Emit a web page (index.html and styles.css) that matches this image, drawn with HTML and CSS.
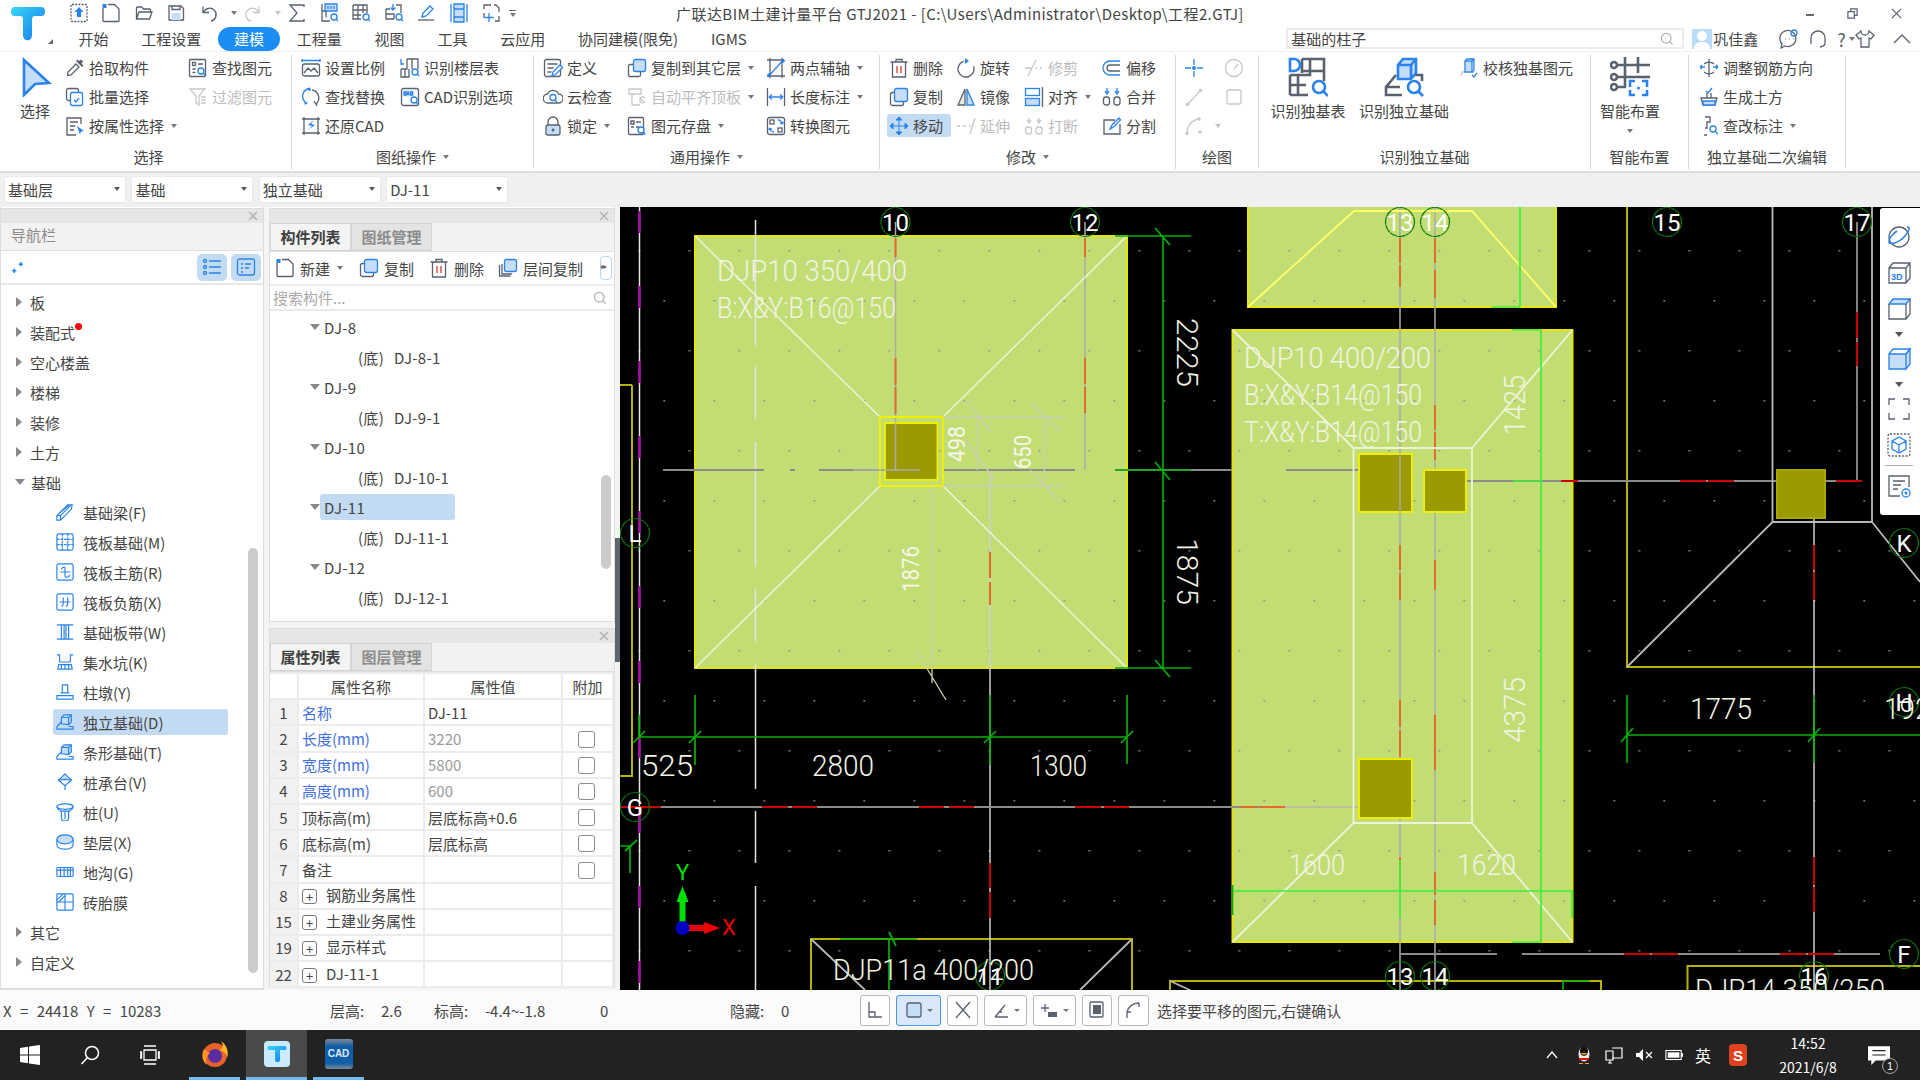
FILE: index.html
```html
<!DOCTYPE html>
<html lang="zh-CN">
<head>
<meta charset="utf-8">
<title>广联达BIM土建计量平台 GTJ2021</title>
<link rel="stylesheet" href="styles.css">
</head>
<body>
<svg class="defs" width="0" height="0">
  <defs>
    <linearGradient id="tgrad" x1="0" y1="0" x2="1" y2="1"><stop offset="0" stop-color="#38d6f5"/><stop offset="1" stop-color="#1478f0"/></linearGradient>
    <pattern id="dots" x="688.5" y="250" width="50" height="100" patternUnits="userSpaceOnUse"><rect width="1.6" height="1.6" fill="#8c8c8c"/><rect x="25" y="50" width="1.6" height="1.6" fill="#8c8c8c"/></pattern>
    <!-- quick access -->
    <symbol id="u-up" viewBox="0 0 20 20"><rect class="g" x="2" y="1.5" width="16" height="17" rx="1" stroke-dasharray="2 1.2"/><path class="bf" d="M10 4l4.500 5H12v5H8V9H5.500z"/></symbol>
    <symbol id="u-new" viewBox="0 0 20 20"><path class="g" d="M2 5v12.500a1 1 0 0 0 1 1h14a1 1 0 0 0 1-1V6l-4.500-4.500H7"/><rect class="bf" x="1.500" y="1" width="4" height="4"/></symbol>
    <symbol id="u-open" viewBox="0 0 20 20"><path class="g" d="M2.500 16V5a1 1 0 0 1 1-1h4l2 2h6a1 1 0 0 1 1 1v2M2.500 16l2.500-7h13l-2.500 7z"/></symbol>
    <symbol id="u-save" viewBox="0 0 20 20"><path class="g" d="M3 3h12l2.500 2.500V17H3z"/><rect class="ff" x="5.500" y="10" width="9" height="7"/><path class="g" d="M6 3v3.500h8V3"/></symbol>
    <symbol id="u-undo" viewBox="0 0 20 20"><path class="g" d="M4 3.500v6h6M4.500 9.500A6.500 6.500 0 1 1 12 18"/></symbol>
    <symbol id="u-redo" viewBox="0 0 20 20"><path class="l" d="M16 3.500v6h-6M15.500 9.500A6.500 6.500 0 1 0 8 18"/></symbol>
    <symbol id="u-sum" viewBox="0 0 20 20"><path class="g" d="M17 4V2H3l7 8-7 8h14v-2"/></symbol>
    <symbol id="u-t1" viewBox="0 0 20 20"><path class="g" d="M3 1v17h8M3 8h4v6"/><rect class="ff" x="6" y="1" width="12" height="7"/><path class="b" d="M6 1h12v7H6zM9 3v3M12 3v3M15 3v3"/><circle class="b" cx="15" cy="14" r="3"/><path class="b" d="M17 16l2 2"/></symbol>
    <symbol id="u-t2" viewBox="0 0 20 20"><path class="g" d="M2 2h14v8M2 2v14h8M2 7h14M2 12h8M7 2v14M12 2v8"/><circle class="b" cx="15" cy="14" r="3"/><path class="b" d="M17 16l2 2"/></symbol>
    <symbol id="u-t3" viewBox="0 0 20 20"><path class="g" d="M2 6v10h8M2 11h8v5M12 2h5v8M2 6h4"/><path class="b" d="M9 1v6M6.500 4.500L9 7l2.500-2.500"/><circle class="b" cx="15" cy="14" r="3"/><path class="b" d="M17 16l2 2"/></symbol>
    <symbol id="u-pen" viewBox="0 0 20 20"><path class="g" d="M2 17h16"/><path class="b" d="M6 14l1-4 7-7 3 3-7 7z"/></symbol>
    <symbol id="u-film" viewBox="0 0 20 20"><rect class="ff" x="5" y="1" width="10" height="18"/><path class="b" d="M2 1v18M18 1v18M5 1h10v18H5zM5 6h10M5 14h10"/></symbol>
    <symbol id="u-dash" viewBox="0 0 20 20"><path class="g" d="M3 6V2h4l3 0M13 2h2l3 3v4M18 13v5h-4M3 10v5"/><path class="b" d="M8 10v9M3.500 14.500h9"/></symbol>
    <!-- ribbon -->
    <symbol id="r-pick" viewBox="0 0 20 20"><path class="g" d="M2.500 17.500L3 14l8-8 3 3-8 8z"/><path class="gf" d="M11 3l6 6 1.500-1.500-2-2 1.500-2-2-2-2 1.500-1.500-1.500z"/></symbol>
    <symbol id="r-batch" viewBox="0 0 20 20"><rect class="g" x="1.500" y="1.500" width="12" height="12" rx="2"/><rect class="b white" x="5.500" y="5.500" width="12" height="13" rx="2"/><path class="b" d="M9 13l2 2 3-4"/></symbol>
    <symbol id="r-attr" viewBox="0 0 20 20"><path class="g" d="M16 8V2H2v17h9M5 6h8M5 10h5M5 14h4"/><path class="bf" d="M12 10l7 5-3 .5-1 3z"/></symbol>
    <symbol id="r-find" viewBox="0 0 20 20"><rect class="g" x="1.500" y="1.500" width="16" height="17" rx="1"/><rect class="g" x="4.500" y="4.500" width="3" height="3"/><path class="g" d="M10 6h5M4.500 11h3M4.500 14.500h3"/><circle class="b white" cx="13" cy="13" r="3"/><path class="b" d="M15 15l3 3"/></symbol>
    <symbol id="r-filter" viewBox="0 0 20 20"><path class="l" d="M2 2h15l-6 7v9l-3-2V9z"/><path class="l" d="M13 10h5M13 13h5M13 16h5"/></symbol>
    <symbol id="r-scale" viewBox="0 0 20 20"><path class="b" d="M1 1v3M19 1v3M1 2.500h18"/><rect class="g" x="1.500" y="6" width="17" height="12" rx="2"/><path class="g" d="M3 15l4-5 3 3 3-3 4 5"/></symbol>
    <symbol id="r-floor" viewBox="0 0 20 20"><path class="g" d="M7 1v10H1M7 1h11v10M12 1v10M1 11v8h8v-8M5 11v8"/><path class="b" d="M1 1v5h3"/><circle class="b white" cx="15" cy="14" r="3"/><path class="b" d="M17 16l2 2"/></symbol>
    <symbol id="r-replace" viewBox="0 0 20 20"><path class="b" d="M8 1.500A8 8 0 0 0 4 15"/><path class="g" d="M11 3a8 8 0 0 1 4 14"/><path class="bf" d="M9 0l-3 3 4 1zM4 18l3-2-4-2z"/><path class="g" d="M13 14l3 5"/></symbol>
    <symbol id="r-cad" viewBox="0 0 20 20"><rect class="g" x="1.500" y="1.500" width="17" height="17" rx="2"/><rect class="ff" x="3.500" y="3.500" width="10" height="6"/><path class="b" d="M4 5h2v3H4zM7 8l1-3 1 3M10.500 5v3h2V5z"/><circle class="b white" cx="14" cy="13" r="3"/><path class="b" d="M16 15l2.500 3"/></symbol>
    <symbol id="r-restore" viewBox="0 0 20 20"><path class="g" d="M1 3h18M1 17h18M3 1v18M17 1v18"/><path class="bf" d="M13 4l-6 5 4 1-4 4 7-5-4-1z"/></symbol>
    <symbol id="r-def" viewBox="0 0 20 20"><rect class="g" x="1.500" y="1.500" width="16" height="17" rx="2"/><path class="g" d="M4.500 6h10M4.500 10h6M4.500 14h4"/><path class="b white" d="M9 18l1-4 7-7 2.500 2.500-7 7z"/></symbol>
    <symbol id="r-cloud" viewBox="0 0 20 20"><path class="g" d="M5 16a4.500 4.500 0 0 1-.5-9 6 6 0 0 1 11 0 4.500 4.500 0 0 1 0 9z"/><circle class="b" cx="10" cy="10.500" r="3"/><path class="b" d="M12 13l2 2"/></symbol>
    <symbol id="r-lock" viewBox="0 0 20 20"><path class="g" d="M5 9V6a5 5 0 0 1 10 0v3"/><rect class="g ff" x="3" y="9" width="14" height="10" rx="2"/><circle class="gs" cx="10" cy="14" r="1.500"/></symbol>
    <symbol id="r-copyf" viewBox="0 0 20 20"><rect class="g" x="1.500" y="6.500" width="12" height="12" rx="1.500"/><rect class="b ff" x="6.500" y="1.500" width="12" height="12" rx="2"/></symbol>
    <symbol id="r-auto" viewBox="0 0 20 20"><path class="l" d="M2 2h12v5H2zM5 7v11M5 18h8M13 11l5 5M18 11a3 3 0 1 0-2 5"/></symbol>
    <symbol id="r-store" viewBox="0 0 20 20"><rect class="g" x="1.500" y="1.500" width="15" height="17" rx="1"/><path class="g" d="M4 5h3v3H4zM4 11h3M9 6h5M9 11h3"/><circle class="b white" cx="14" cy="14" r="3"/><path class="b" d="M16 16l2.500 2.500"/></symbol>
    <symbol id="r-two" viewBox="0 0 20 20"><path class="g" d="M1 2h16M1 18h18M4 0v20M16 0v20"/><path class="b" d="M2 19L18 1"/><circle class="bf" cx="3" cy="17" r="1.800"/><circle class="bf" cx="17" cy="3" r="1.800"/></symbol>
    <symbol id="r-len" viewBox="0 0 20 20"><path class="g" d="M1.500 1v18M18.500 1v18"/><path class="b" d="M3 10h14M3 10l3-2.500M3 10l3 2.500M17 10l-3-2.500M17 10l-3 2.500"/></symbol>
    <symbol id="r-conv" viewBox="0 0 20 20"><rect class="g" x="1.500" y="1.500" width="17" height="17" rx="2"/><rect class="g" x="4" y="4" width="4" height="4"/><rect class="g" x="12" y="12" width="4" height="4"/><path class="b" d="M12 4a4 4 0 0 1 4 4M16 8l1.500-2M16 8l-2-1.500M8 16a4 4 0 0 1-4-4M4 12l-1.500 2M4 12l2 1.500"/></symbol>
    <symbol id="r-del" viewBox="0 0 20 20"><path class="g" d="M1.500 4h17M7 4V1.500h6V4M3.500 4v15h13V4"/><path class="red" d="M8 8v7M12 8v7"/></symbol>
    <symbol id="r-copy" viewBox="0 0 20 20"><rect class="g" x="1.500" y="5.500" width="13" height="13" rx="2"/><rect class="b ff" x="5.500" y="1.500" width="13" height="13" rx="2"/></symbol>
    <symbol id="r-copyl" viewBox="0 0 20 20"><path class="g" d="M1.500 7v11h11M4 6v10h10"/><rect class="b ff" x="6.500" y="1.500" width="12" height="12" rx="2"/></symbol>
    <symbol id="r-move" viewBox="0 0 20 20"><path class="bd" d="M10 2v16M2 10h16M10 1l-3 3h6zM10 19l-3-3h6zM1 10l3-3v6zM19 10l-3-3v6z"/></symbol>
    <symbol id="r-rot" viewBox="0 0 20 20"><circle class="g" cx="10" cy="11" r="8" stroke-dasharray="38 12" transform="rotate(-20 10 11)"/><path class="bf" d="M9 0l4 3-4 3z"/></symbol>
    <symbol id="r-mirror" viewBox="0 0 20 20"><path class="gf2" d="M9 2L2 18h7z"/><path class="g" d="M9 2L2 18h7z"/><path class="b ff" d="M11 2l7 16h-7z"/></symbol>
    <symbol id="r-trim" viewBox="0 0 20 20"><path class="l" d="M1 10h7M11 10h2M16 10h2M4 18L12 2"/></symbol>
    <symbol id="r-ext" viewBox="0 0 20 20"><path class="l" d="M1 10h3M7 10h3M13 10h2M14 18L19 2"/></symbol>
    <symbol id="r-brk" viewBox="0 0 20 20"><rect class="l" x="1.500" y="11" width="6" height="7" rx="2.500"/><rect class="l" x="12" y="11" width="6" height="7" rx="2.500"/><path class="l" d="M5 2v5M15 2v5M3 4l2 3 2-3M13 4l2 3 2-3"/></symbol>
    <symbol id="r-align" viewBox="0 0 20 20"><rect class="b" x="1.500" y="1.500" width="14" height="7"/><rect class="b ff" x="1.500" y="11.500" width="14" height="7"/><path class="g" d="M18.500 0v20"/></symbol>
    <symbol id="r-off" viewBox="0 0 20 20"><path class="b" d="M18 3H8a7 7 0 0 0 0 14h10"/><path class="g" d="M18 7H8a3 3 0 0 0 0 6h10"/></symbol>
    <symbol id="r-merge" viewBox="0 0 20 20"><rect class="g" x="1.500" y="10" width="6" height="8" rx="2.500"/><rect class="g" x="12" y="10" width="6" height="8" rx="2.500"/><path class="b" d="M5 1v5M15 1v5M3 4l2 3 2-3M13 4l2 3 2-3"/></symbol>
    <symbol id="r-split" viewBox="0 0 20 20"><path class="g" d="M13 4H2v14h16V8"/><path class="b" d="M8 13l2-4 7-7 1.500 2-7 7z"/></symbol>
    <symbol id="d-point" viewBox="0 0 20 20"><path class="bd2" d="M1 10h6M13 10h6M10 1v6M10 13v6"/><circle class="bf" cx="10" cy="10" r="2"/></symbol>
    <symbol id="d-clock" viewBox="0 0 20 20"><circle class="l" cx="10" cy="10" r="8.500"/><path class="l" d="M10 11l4-5"/></symbol>
    <symbol id="d-line" viewBox="0 0 20 20"><path class="l" d="M3 18L17 3"/><circle class="lf" cx="16.500" cy="3.500" r="1.800"/><circle class="lf" cx="3.500" cy="17.500" r="1.800"/></symbol>
    <symbol id="d-rect" viewBox="0 0 20 20"><rect class="l" x="3" y="3" width="14" height="14" rx="2"/></symbol>
    <symbol id="d-arc" viewBox="0 0 20 20"><path class="l" d="M3 18A14 14 0 0 1 15 3"/><circle class="lf" cx="15" cy="3" r="1.800"/><circle class="lf" cx="3" cy="17.500" r="1.800"/><circle class="lf" cx="16" cy="16" r="1.800"/></symbol>
    <symbol id="b-sel" viewBox="0 0 40 40"><path class="bt ff" d="M9 3l25 23-14 1-11 11z"/></symbol>
    <symbol id="b-tab" viewBox="0 0 40 40"><path class="gt" d="M14 2h22v22M22 2v16M14 14h22M14 2v14M2 18h20v-4M2 38h18M2 18v20M10 18v20M2 28h16"/><path class="bt" d="M2 2v12h4a6 6 0 0 0 0-12z"/><circle class="bt white" cx="31" cy="30" r="6"/><path class="bt" d="M35 34l5 5"/></symbol>
    <symbol id="b-iso" viewBox="0 0 40 40"><path class="gt" d="M12 18L2 30v8h16M2 30h14M26 18h12v6"/><path class="bt ff" d="M14 22V8l5-6h13v14l-5 6zM14 8h13v14M27 8l5-6"/><circle class="bt white" cx="30" cy="30" r="6"/><path class="bt" d="M34 34l5 5"/></symbol>
    <symbol id="b-smart" viewBox="0 0 40 40"><path class="gt" d="M15 0v30M28 0v16M4 8h36M4 20h36M4 30h12"/><circle class="gt white" cx="4" cy="8" r="3"/><circle class="gt white" cx="4" cy="20" r="3"/><circle class="gt white" cx="4" cy="30" r="3"/><path class="bt" d="M20 30v-6h5M32 24h5v6M20 33v5h5M32 38h5v-5"/><circle class="bf" cx="28.500" cy="31" r="1.500"/></symbol>
    <symbol id="r-check" viewBox="0 0 20 20"><path class="l" d="M2 18l1-4h12"/><rect class="b ff" x="6" y="3" width="7" height="11"/><path class="b" d="M6 3l2-2h7v11l-2 2M13 3l2-2"/><path class="b" d="M13 17l2 2 3-4"/></symbol>
    <symbol id="r-adj" viewBox="0 0 20 20"><path class="g" d="M10 1v18M5 6a8 8 0 0 1 10 0M5 14a8 8 0 0 0 10 0"/><path class="b" d="M1 9h5M14 9h5M1 9l2-2M1 9l2 2M19 9l-2-2M19 9l-2 2"/></symbol>
    <symbol id="r-earth" viewBox="0 0 20 20"><path class="g" d="M2 11h16l-2 7H4zM8 11V6M12 11V6"/><path class="b ff" d="M3.500 14h13l-1 4h-11z"/><path class="b" d="M7 4l2 2 4-5"/></symbol>
    <symbol id="r-mark" viewBox="0 0 20 20"><path class="g" d="M6 1h5v5H8v6H6M8 19H5"/><circle class="b" cx="14" cy="13" r="3"/><path class="b" d="M16 15l3 3"/></symbol>
    <symbol id="i-search" viewBox="0 0 20 20"><circle cx="9" cy="9" r="6" class="lt"/><path class="lt" d="M13.500 13.500L17 17"/></symbol>
    <!-- nav -->
    <symbol id="n-beam" viewBox="0 0 20 20"><path class="b" d="M1 14L13 2h5l-1 5L5 19H1zM1 14h4v5M5 14L17 2M3 12L15 2"/></symbol>
    <symbol id="n-raft" viewBox="0 0 20 20"><rect class="b" x="1" y="1" width="18" height="18" rx="2"/><path class="b" d="M1 7h18M1 13h18M7 1v18M13 1v18" stroke-dasharray="3 1"/></symbol>
    <symbol id="n-main" viewBox="0 0 20 20"><rect class="b" x="1" y="1" width="18" height="18" rx="2"/><path class="b" d="M5 10h11M10 5v10M6 7a3 3 0 0 1 4-2M15 13a3 3 0 0 1-5 2"/></symbol>
    <symbol id="n-neg" viewBox="0 0 20 20"><rect class="b" x="1" y="1" width="18" height="18" rx="2"/><path class="b" d="M4 10h12M8 5v7a3 3 0 0 1-2 3M13 5v7a3 3 0 0 1-2 3"/></symbol>
    <symbol id="n-strip" viewBox="0 0 20 20"><path class="b" d="M1 2h18M1 18h18M6 2v16M14 2v16M9 2v16M11 2v16"/></symbol>
    <symbol id="n-sump" viewBox="0 0 20 20"><path class="b" d="M1 2h3v8h12V2h3M3 13h14l1 5H2zM6 13v5M10 13v5M14 13v5"/></symbol>
    <symbol id="n-cap" viewBox="0 0 20 20"><path class="b" d="M7 11V2h6v9M5 11h10M1 18v-4h18v4z"/></symbol>
    <symbol id="n-iso" viewBox="0 0 20 20"><path class="b ff" d="M6 12V5l3-3h8v8l-3 3z"/><path class="b" d="M6 5h8v8M14 5l3-3M6 10L1 15v3h18v-3h-5"/></symbol>
    <symbol id="n-pcap" viewBox="0 0 20 20"><path class="b ff" d="M10 1l7 7-7 6-7-6z"/><path class="b white" d="M10 7l7 1-7 6-7-6zM10 14v5"/></symbol>
    <symbol id="n-pile" viewBox="0 0 20 20"><ellipse class="b" cx="10" cy="4" rx="9" ry="3"/><path class="b" d="M1 4c0 4 4 3 4 5h10c0-2 4-1 4-5M6 9v8a4 3 0 0 0 8 0V9M10 9v9"/></symbol>
    <symbol id="n-pad" viewBox="0 0 20 20"><ellipse class="b ff" cx="10" cy="7" rx="9" ry="5"/><path class="b" d="M1 7v6c0 3 4 5 9 5s9-2 9-5V7"/></symbol>
    <symbol id="n-trench" viewBox="0 0 20 20"><rect class="b" x="1" y="5" width="18" height="10" rx="1"/><path class="b" d="M1 8h18M5 5v10M9 5v10M13 5v10M16 5v10"/></symbol>
    <symbol id="n-brick" viewBox="0 0 20 20"><rect class="b" x="1" y="1" width="18" height="18" rx="1"/><path class="b" d="M1 10h18M10 1v18M1 8l7-7M3 10l7-7"/></symbol>
    <!-- view toolbar -->
    <symbol id="v-orbit" viewBox="0 0 24 24"><circle class="g" cx="12" cy="12" r="10"/><path class="bt2" d="M2 18C6 20 14 16 18 11S24 2 20 2"/><path class="bt2" d="M2 18c-1-3 2-8 8-12"/></symbol>
    <symbol id="v-3d" viewBox="0 0 24 24"><path class="g" d="M2 7v15h17V7zM2 7l4-5h17v15l-4 5M19 7l4-5"/><text class="v3" x="4" y="19">3D</text></symbol>
    <symbol id="v-top" viewBox="0 0 24 24"><path class="b ff" d="M2 7l4-5h17l-4 5z"/><path class="g" d="M2 7v15h17V7M19 22l4-5V2"/></symbol>
    <symbol id="v-box" viewBox="0 0 24 24"><path class="b ff" d="M2 7v15h17V7zM19 7l4-5v15l-4 5z"/><path class="b" d="M2 7l4-5h17l-4 5"/></symbol>
    <symbol id="v-fit" viewBox="0 0 24 24"><path class="g" d="M2 8V2h6M16 2h6v6M22 16v6h-6M8 22H2v-6"/></symbol>
    <symbol id="v-cube" viewBox="0 0 24 24"><rect class="g" x="1" y="1" width="22" height="22" rx="2" stroke-dasharray="2 1.500"/><path class="b" d="M12 4l7 4v8l-7 4-7-4V8zM5 8l7 4 7-4M12 12v8"/></symbol>
    <symbol id="v-list" viewBox="0 0 24 24"><path class="g" d="M22 13V2H2v20h11M6 7h12M6 11h8M6 15h5"/><circle class="b" cx="19" cy="19" r="4"/><circle class="bf" cx="19" cy="19" r="1.500"/></symbol>
    <!-- status -->
    <symbol id="s-l" viewBox="0 0 20 20"><path class="g" d="M4 2v15h13M4 12h6v5"/></symbol>
    <symbol id="s-rect" viewBox="0 0 20 20"><rect class="g ff" x="3" y="3" width="14" height="14" rx="2"/></symbol>
    <symbol id="s-x" viewBox="0 0 20 20"><path class="g" d="M3 2l14 16M17 2L3 18"/></symbol>
    <symbol id="s-ang" viewBox="0 0 20 20"><path class="g" d="M4 17h13M4 17L14 5M8 12h3"/></symbol>
    <symbol id="s-plus" viewBox="0 0 20 20"><path class="g" d="M5 4v8M1 8h8"/><rect class="gf" x="8" y="12" width="9" height="5"/></symbol>
    <symbol id="s-box" viewBox="0 0 20 20"><rect class="g" x="3" y="2" width="13" height="15" rx="1"/><rect class="gf" x="6" y="5" width="8" height="9"/></symbol>
    <symbol id="s-arc" viewBox="0 0 20 20"><path class="g" d="M3 18V12A12 12 0 0 1 15 3M3 12h4M15 3v4"/></symbol>
  </defs>
</svg>

<div class="app">
  <header class="header">
    <div class="logo-wrap">
      <svg class="logo" viewBox="0 0 36 36"><path fill="url(#tgrad)" d="M3 2h28c4 0 4 9 0 9h-8c-2 1-2 2-2 4v15c0 7-9 7-9 0V15c0-2 0-3-2-4H3c-4 0-4-9 0-9z"/></svg>
      <span class="logo-mark"></span>
    </div>
    <div class="header-rows">
      <div class="titlerow">
        <div class="qa">
          <svg class="qi"><use href="#u-up"/></svg>
          <svg class="qi"><use href="#u-new"/></svg>
          <svg class="qi"><use href="#u-open"/></svg>
          <svg class="qi"><use href="#u-save"/></svg>
          <span class="qi-c"><svg class="qi"><use href="#u-undo"/></svg><i class="car"></i></span>
          <span class="qi-c"><svg class="qi"><use href="#u-redo"/></svg><i class="car dim"></i></span>
          <svg class="qi"><use href="#u-sum"/></svg>
          <svg class="qi"><use href="#u-t1"/></svg>
          <svg class="qi"><use href="#u-t2"/></svg>
          <svg class="qi"><use href="#u-t3"/></svg>
          <svg class="qi"><use href="#u-pen"/></svg>
          <svg class="qi"><use href="#u-film"/></svg>
          <svg class="qi"><use href="#u-dash"/></svg>
          <span class="qa-more"><i class="qa-bar"></i><i class="car"></i></span>
        </div>
        <div class="title">广联达BIM土建计量平台 GTJ2021 - [C:\Users\Administrator\Desktop\工程2.GTJ]</div>
        <div class="winctl">
          <span class="win-min"></span>
          <svg class="win-ic" viewBox="0 0 12 12"><path class="g" d="M1 4h7v7H1zM4 4V1h7v7H8"/></svg>
          <svg class="win-ic" viewBox="0 0 12 12"><path class="g" d="M1 1l10 10M11 1L1 11"/></svg>
        </div>
      </div>
      <div class="menurow">
        <nav class="menu">
          <span class="mi">开始</span><span class="mi">工程设置</span><span class="mi on">建模</span><span class="mi">工程量</span><span class="mi">视图</span><span class="mi">工具</span><span class="mi">云应用</span><span class="mi">协同建模(限免)</span><span class="mi">IGMS</span>
        </nav>
        <div class="searchbox"><span>基础的柱子</span><svg class="sicon"><use href="#i-search"/></svg></div>
        <div class="user">
          <svg class="avatar" viewBox="0 0 20 20"><rect width="20" height="20" fill="#b9dcfa"/><circle cx="10" cy="7" r="5" fill="#fff"/><path d="M2 20c0-6 4-7 8-7s8 1 8 7z" fill="#fff"/></svg>
          <span class="uname">巩佳鑫</span>
          <svg class="ui-ic" viewBox="0 0 20 20"><path class="g" d="M3 15a8 8 0 1 1 3 2l-4 2z"/><circle class="b" cx="15" cy="4" r="3"/><path class="g" d="M6 10h.5M10 10h.5M14 10h.5"/></svg>
          <svg class="ui-ic" viewBox="0 0 20 20"><path class="g" d="M3 12V9a7 7 0 0 1 14 0v3M3 10v5M17 10v5M17 15a6 4 0 0 1-5 3"/></svg>
          <span class="help">?<i class="car"></i></span>
          <svg class="ui-ic" viewBox="0 0 20 20"><path class="g" d="M6 2L1 6l3 4 2-1v9h8V9l2 1 3-4-5-4a4 4 0 0 1-8 0z"/></svg>
          <svg class="ui-ic" viewBox="0 0 20 20"><path class="g" d="M2 14l8-8 8 8"/></svg>
        </div>
      </div>
    </div>
  </header>

  <section class="ribbon">
    <div class="grp w1">
      <div class="grid g1">
        <div class="big bsel"><svg class="bigi"><use href="#b-sel"/></svg><span>选择</span></div>
        <span class="t"><svg class="ti"><use href="#r-pick"/></svg>拾取构件</span>
        <span class="t"><svg class="ti"><use href="#r-find"/></svg>查找图元</span>
        <span class="t"><svg class="ti"><use href="#r-batch"/></svg>批量选择</span>
        <span class="t off"><svg class="ti"><use href="#r-filter"/></svg>过滤图元</span>
        <span class="t"><svg class="ti"><use href="#r-attr"/></svg>按属性选择<i class="car"></i></span>
      </div>
      <div class="glabel gl1">选择</div>
    </div>
    <div class="grp w2">
      <div class="grid g2">
        <span class="t"><svg class="ti"><use href="#r-scale"/></svg>设置比例</span>
        <span class="t"><svg class="ti"><use href="#r-floor"/></svg>识别楼层表</span>
        <span class="t"><svg class="ti"><use href="#r-replace"/></svg>查找替换</span>
        <span class="t"><svg class="ti"><use href="#r-cad"/></svg>CAD识别选项</span>
        <span class="t"><svg class="ti"><use href="#r-restore"/></svg>还原CAD</span>
      </div>
      <div class="glabel">图纸操作<i class="car"></i></div>
    </div>
    <div class="grp w3">
      <div class="grid g3">
        <span class="t"><svg class="ti"><use href="#r-def"/></svg>定义</span>
        <span class="t"><svg class="ti"><use href="#r-copyf"/></svg>复制到其它层<i class="car"></i></span>
        <span class="t"><svg class="ti"><use href="#r-two"/></svg>两点辅轴<i class="car"></i></span>
        <span class="t"><svg class="ti"><use href="#r-cloud"/></svg>云检查</span>
        <span class="t off"><svg class="ti"><use href="#r-auto"/></svg>自动平齐顶板<i class="car"></i></span>
        <span class="t"><svg class="ti"><use href="#r-len"/></svg>长度标注<i class="car"></i></span>
        <span class="t"><svg class="ti"><use href="#r-lock"/></svg>锁定<i class="car"></i></span>
        <span class="t"><svg class="ti"><use href="#r-store"/></svg>图元存盘<i class="car"></i></span>
        <span class="t"><svg class="ti"><use href="#r-conv"/></svg>转换图元</span>
      </div>
      <div class="glabel">通用操作<i class="car"></i></div>
    </div>
    <div class="grp w4">
      <div class="grid g4">
        <span class="t"><svg class="ti"><use href="#r-del"/></svg>删除</span>
        <span class="t"><svg class="ti"><use href="#r-rot"/></svg>旋转</span>
        <span class="t off"><svg class="ti"><use href="#r-trim"/></svg>修剪</span>
        <span class="t"><svg class="ti"><use href="#r-off"/></svg>偏移</span>
        <span class="t"><svg class="ti"><use href="#r-copy"/></svg>复制</span>
        <span class="t"><svg class="ti"><use href="#r-mirror"/></svg>镜像</span>
        <span class="t"><svg class="ti"><use href="#r-align"/></svg>对齐<i class="car"></i></span>
        <span class="t"><svg class="ti"><use href="#r-merge"/></svg>合并</span>
        <span class="t act"><svg class="ti"><use href="#r-move"/></svg>移动</span>
        <span class="t off"><svg class="ti"><use href="#r-ext"/></svg>延伸</span>
        <span class="t off"><svg class="ti"><use href="#r-brk"/></svg>打断</span>
        <span class="t"><svg class="ti"><use href="#r-split"/></svg>分割</span>
      </div>
      <div class="glabel">修改<i class="car"></i></div>
    </div>
    <div class="grp w5">
      <div class="grid g5">
        <span class="t"><svg class="ti"><use href="#d-point"/></svg></span>
        <span class="t"><svg class="ti"><use href="#d-clock"/></svg></span>
        <span class="t"><svg class="ti"><use href="#d-line"/></svg></span>
        <span class="t"><svg class="ti"><use href="#d-rect"/></svg></span>
        <span class="t"><svg class="ti"><use href="#d-arc"/></svg><i class="car dim"></i></span>
      </div>
      <div class="glabel">绘图</div>
    </div>
    <div class="grp w6">
      <div class="grid g6">
        <div class="big"><svg class="bigi"><use href="#b-tab"/></svg><span>识别独基表</span></div>
        <div class="big bisoc"><svg class="bigi"><use href="#b-iso"/></svg><span>识别独立基础</span></div>
        <span class="t"><svg class="ti"><use href="#r-check"/></svg>校核独基图元</span>
      </div>
      <div class="glabel">识别独立基础</div>
    </div>
    <div class="grp w7">
      <div class="grid g7">
        <div class="big"><svg class="bigi"><use href="#b-smart"/></svg><span>智能布置</span><i class="car bigcar"></i></div>
      </div>
      <div class="glabel">智能布置</div>
    </div>
    <div class="grp w8">
      <div class="grid g8">
        <span class="t"><svg class="ti"><use href="#r-adj"/></svg>调整钢筋方向</span>
        <span class="t"><svg class="ti"><use href="#r-earth"/></svg>生成土方</span>
        <span class="t"><svg class="ti"><use href="#r-mark"/></svg>查改标注<i class="car"></i></span>
      </div>
      <div class="glabel">独立基础二次编辑</div>
    </div>
  </section>

  <section class="combos">
    <div class="combo"><span>基础层</span><i class="car"></i></div>
    <div class="combo"><span>基础</span><i class="car"></i></div>
    <div class="combo"><span>独立基础</span><i class="car"></i></div>
    <div class="combo"><span>DJ-11</span><i class="car"></i></div>
  </section>

  <main class="main">
    <aside class="nav">
      <div class="phead"><svg class="pclose" viewBox="0 0 10 10"><path class="lt" d="M1 1l8 8M9 1L1 9"/></svg></div>
      <div class="navtitle">导航栏</div>
      <div class="navtools">
        <svg class="spark" viewBox="0 0 12 12"><path class="b" d="M1 9h4M3 7v4M7 3h4M9 1v4"/></svg>
        <span class="navbtns">
          <span class="nbtn"><svg class="nbi" viewBox="0 0 20 20"><circle class="b" cx="3" cy="4" r="1.500"/><circle class="b" cx="3" cy="10" r="1.500"/><circle class="b" cx="3" cy="16" r="1.500"/><path class="b" d="M7 4h12M7 10h12M7 16h12"/></svg></span>
          <span class="nbtn"><svg class="nbi" viewBox="0 0 20 20"><rect class="b" x="1.500" y="2" width="17" height="16" rx="2"/><path class="b" d="M5 7h2M9 7h6M5 11h2M9 11h4M5 15h2"/></svg></span>
        </span>
      </div>
      <div class="navtree">
        <div class="nr"><i class="tr"></i>板</div>
        <div class="nr"><i class="tr"></i><span class="dotted">装配式</span></div>
        <div class="nr"><i class="tr"></i>空心楼盖</div>
        <div class="nr"><i class="tr"></i>楼梯</div>
        <div class="nr"><i class="tr"></i>装修</div>
        <div class="nr"><i class="tr"></i>土方</div>
        <div class="nr"><i class="tr down"></i>基础</div>
        <div class="nr sub"><svg class="ni"><use href="#n-beam"/></svg>基础梁(F)</div>
        <div class="nr sub"><svg class="ni"><use href="#n-raft"/></svg>筏板基础(M)</div>
        <div class="nr sub"><svg class="ni"><use href="#n-main"/></svg>筏板主筋(R)</div>
        <div class="nr sub"><svg class="ni"><use href="#n-neg"/></svg>筏板负筋(X)</div>
        <div class="nr sub"><svg class="ni"><use href="#n-strip"/></svg>基础板带(W)</div>
        <div class="nr sub"><svg class="ni"><use href="#n-sump"/></svg>集水坑(K)</div>
        <div class="nr sub"><svg class="ni"><use href="#n-cap"/></svg>柱墩(Y)</div>
        <div class="nr sub"><span class="nhl"><svg class="ni"><use href="#n-iso"/></svg>独立基础(D)</span></div>
        <div class="nr sub"><svg class="ni"><use href="#n-iso"/></svg>条形基础(T)</div>
        <div class="nr sub"><svg class="ni"><use href="#n-pcap"/></svg>桩承台(V)</div>
        <div class="nr sub"><svg class="ni"><use href="#n-pile"/></svg>桩(U)</div>
        <div class="nr sub"><svg class="ni"><use href="#n-pad"/></svg>垫层(X)</div>
        <div class="nr sub"><svg class="ni"><use href="#n-trench"/></svg>地沟(G)</div>
        <div class="nr sub"><svg class="ni"><use href="#n-brick"/></svg>砖胎膜</div>
        <div class="nr"><i class="tr"></i>其它</div>
        <div class="nr"><i class="tr"></i>自定义</div>
        <span class="scroll navscroll"></span>
      </div>
    </aside>

    <div class="mid">
      <section class="plist">
        <div class="phead"><svg class="pclose" viewBox="0 0 10 10"><path class="lt" d="M1 1l8 8M9 1L1 9"/></svg></div>
        <div class="tabs"><span class="tab on">构件列表</span><span class="tab">图纸管理</span></div>
        <div class="ptools">
          <span class="pt ptnew"><svg class="pti"><use href="#u-new"/></svg>新建<i class="car"></i></span>
          <span class="pt ptcopy"><svg class="pti"><use href="#r-copy"/></svg>复制</span>
          <span class="pt ptdel"><svg class="pti"><use href="#r-del"/></svg>删除</span>
          <span class="pt ptfl"><svg class="pti"><use href="#r-copyl"/></svg>层间复制</span>
          <span class="ptmore"></span>
        </div>
        <div class="psearch"><span>搜索构件...</span><svg class="sicon"><use href="#i-search"/></svg></div>
        <div class="ptree">
          <div class="pr"><i class="tr down"></i>DJ-8</div>
          <div class="pr child"><span class="di">(底)</span>DJ-8-1</div>
          <div class="pr"><i class="tr down"></i>DJ-9</div>
          <div class="pr child"><span class="di">(底)</span>DJ-9-1</div>
          <div class="pr"><i class="tr down"></i>DJ-10</div>
          <div class="pr child"><span class="di">(底)</span>DJ-10-1</div>
          <div class="pr"><i class="tr down"></i><span class="phl">DJ-11</span></div>
          <div class="pr child"><span class="di">(底)</span>DJ-11-1</div>
          <div class="pr"><i class="tr down"></i>DJ-12</div>
          <div class="pr child"><span class="di">(底)</span>DJ-12-1</div>
          <div class="pr"><i class="tr down"></i>DJ-13</div>
          <span class="scroll pscroll"></span>
        </div>
      </section>
      <section class="pprop">
        <div class="phead"><svg class="pclose" viewBox="0 0 10 10"><path class="lt" d="M1 1l8 8M9 1L1 9"/></svg></div>
        <div class="tabs"><span class="tab on">属性列表</span><span class="tab">图层管理</span></div>
        <table class="ptable">
          <colgroup><col class="c1"><col class="c2"><col class="c3"><col class="c4"></colgroup>
          <thead><tr><th></th><th>属性名称</th><th>属性值</th><th>附加</th></tr></thead>
          <tbody>
            <tr><td class="ix">1</td><td class="bl">名称</td><td>DJ-11</td><td></td></tr>
            <tr><td class="ix">2</td><td class="bl">长度(mm)</td><td class="gr">3220</td><td class="ck"><i class="cb"></i></td></tr>
            <tr><td class="ix">3</td><td class="bl">宽度(mm)</td><td class="gr">5800</td><td class="ck"><i class="cb"></i></td></tr>
            <tr><td class="ix">4</td><td class="bl">高度(mm)</td><td class="gr">600</td><td class="ck"><i class="cb"></i></td></tr>
            <tr><td class="ix">5</td><td>顶标高(m)</td><td>层底标高+0.6</td><td class="ck"><i class="cb"></i></td></tr>
            <tr><td class="ix">6</td><td>底标高(m)</td><td>层底标高</td><td class="ck"><i class="cb"></i></td></tr>
            <tr><td class="ix">7</td><td>备注</td><td></td><td class="ck"><i class="cb"></i></td></tr>
            <tr><td class="ix">8</td><td><span class="ex">+</span>钢筋业务属性</td><td></td><td></td></tr>
            <tr><td class="ix">15</td><td><span class="ex">+</span>土建业务属性</td><td></td><td></td></tr>
            <tr><td class="ix">19</td><td><span class="ex">+</span>显示样式</td><td></td><td></td></tr>
            <tr><td class="ix">22</td><td><span class="ex">+</span>DJ-11-1</td><td></td><td></td></tr>
          </tbody>
        </table>
      </section>
    </div>

    <div class="splitter"><span class="handle"></span></div>

    <div class="canvas">
      <svg class="cad" viewBox="620 207 1300 783" width="1300" height="783">
        <rect x="620" y="207" width="1300" height="783" fill="#000"/>
        <!-- foundations -->
        <rect class="pad" x="695" y="236" width="432" height="432"/>
        <rect class="pad" x="1248" y="200" width="308" height="107"/>
        <rect class="pad" x="1232.500" y="330" width="340" height="612"/>
        <rect x="0" y="0" width="1920" height="1080" fill="url(#dots)"/>
        <path class="ol" d="M632 385H620M632 385V776H620"/>
        <path class="ol" d="M1627 207V667H1920"/>
        <path class="ol" d="M811 990V939H1132V990"/>
        <path class="ol" d="M1170 990V981H1601V990"/>
        <path class="ol" d="M1687.500 990V966H1920"/>
        <rect class="padline" x="695" y="236" width="432" height="432"/>
        <rect class="padline" x="1248" y="200" width="308" height="107"/>
        <rect class="padline" x="1232.500" y="330" width="340" height="612"/>

        <!-- axis lines -->
        <path class="wd" d="M639.500 207V990"/>
        <path class="mg" d="M639.500 211V990" stroke-dasharray="22 53"/>
        <path class="wd" d="M755.500 220V990" stroke-dasharray="125 22 52 23"/>
        <path class="ax" d="M895.500 222V470M1085 222V470M1400 207V990M1435 207V990M1857 222V481"/>
        <path class="ax2" d="M990 470V990M1814 481V990"/>
        <path class="axh" d="M663 470H764M790 470H795M819 470H920M943 470H1075M1115 470H1232M1286 470H1400M1435 481H1857"/>
        <path class="axh" d="M620 807H1285M1400 954H1497M1522 954H1880"/>
        <path class="axl" d="M1285 807H1400"/>
        <path class="or" d="M895.500 238v19M895.500 358v27M895.500 387v27M1085 238v19M1085 358v26M1085 387v26M990 552v26M990 582v23M1400 238v25M1400 265v22M1435 238v25M1435 270v28M1435 405v25M1435 432v28M1400 545v25M1400 573v27M1435 560v30M1400 700v27M1400 730v27M1435 715v30M1435 745v25M1400 857v26M1435 872v23M1435 900v25M1240 807h17M1260 807h25"/>
        <path class="rd" d="M990 863v25M990 892v26M1814 545v25M1814 572v28M1814 857v28M1814 887v25M1857 312v26M1857 342v24M620 807h41M762 807h26M792 807h25M919 807h25M949 807h25M1075 807h26M1104 807h25M1561 481h17M1680 481h26M1708 481h26M1836 481h26M1624 954h26M1652 954h26M1780 954h26M1808 954h26"/>

        <!-- pad inner geometry -->
        <path class="dg" d="M695 236L880 417M1127 236L943 417M695 668L880 486M1127 668L943 486"/>
        <path class="dgb" d="M1248 307L1354 211H1472L1556 307"/>
        <path class="dgw" d="M1353.500 448H1472V823H1353.500zM1232.500 330L1353.500 448M1572.500 330L1472 448M1232.500 942L1353.500 823M1572.500 942L1472 823"/>
        <path class="dgg" d="M1772.500 207V522H1872V207M1772.500 522L1627 667M1872 522L1920 582"/>
        <path class="dgg" d="M811 939L865 990M1132 939L1080 990M1170 981L1190 990"/>
        <rect class="col" x="885" y="423" width="52.500" height="57"/>
        <rect class="colframe" x="880" y="417" width="63" height="69"/>
        <rect class="col" x="1359" y="454" width="53" height="58"/>
        <rect class="col" x="1424" y="470" width="42" height="42"/>
        <rect class="col" x="1359" y="759" width="53" height="59"/>
        <rect class="col dark" x="1777" y="470" width="48" height="48"/>
        <path class="ax" d="M895.500 423V470M853 470H920M1400 454V512"/>

        <!-- dimension helpers -->
        <path class="ext" d="M943 417H1065M943 486H1065M977 417V470M1044.500 417V486M965 400L991 432M1030 402L1060 432M965 440L995 480M1030 470L1060 502M932 486V683M917 652L946 700"/>
        <path class="gn" d="M1163 236V668M1115 236H1191M1115 470H1191M1115 668H1191M1155 228L1170 245M1155 462L1170 480M1155 660L1170 677"/>
        <path class="gn" d="M639 737H1127M695 695V765M990 695V765M1127 695V764M639 715V737M633 743L645 731M689 743L701 731M984 743L996 731M1121 743L1133 731M620 846H632M630 873V846M625 851L637 840"/>
        <path class="gn" d="M1627 735H1920M1627 695V763M1814 695V763M1621 742L1633 728M1808 742L1820 728"/>
        <path class="gnb" d="M1541 330V942M1232 891H1572M1512 330H1541M1512 942H1541M1513 481H1541M1520 207V307M1492 307H1520M1400 860V918M1572 890V918"/>
        <path class="gn" d="M840 939H917M889 932L896 946M889 939V990M1562 981H1590M1563 981V990"/>
        <path class="gn" d="M1232.500 885v30"/>

        <!-- axis bubbles -->
        <g class="bub">
          <circle cx="895.500" cy="222" r="14.500"/><circle cx="1085" cy="222" r="14.500"/><circle cx="1400" cy="222" r="14.500"/><circle cx="1435" cy="222" r="14.500"/><circle cx="1667" cy="222" r="14.500"/><circle cx="1857" cy="222" r="14.500"/>
          <circle cx="1400" cy="976" r="14.500"/><circle cx="1435" cy="976" r="14.500"/><circle cx="1814" cy="976" r="14.500"/><circle cx="990" cy="976" r="14.500"/>
          <circle cx="635" cy="533" r="14.500"/><circle cx="635" cy="807" r="14.500"/><circle cx="1904" cy="543" r="14.500"/><circle cx="1904" cy="702" r="14.500"/><circle cx="1904" cy="954" r="14.500"/>
        </g>

        <!-- cad texts -->
        <g class="ct">
          <text x="717" y="281" textLength="190" lengthAdjust="spacingAndGlyphs">DJP10 350/400</text>
          <text x="717" y="318" textLength="179" lengthAdjust="spacingAndGlyphs">B:X&amp;Y:B16@150</text>
          <text x="1244" y="368" textLength="187" lengthAdjust="spacingAndGlyphs">DJP10 400/200</text>
          <text x="1244" y="405" textLength="178" lengthAdjust="spacingAndGlyphs">B:X&amp;Y:B14@150</text>
          <text x="1244" y="442" textLength="178" lengthAdjust="spacingAndGlyphs">T:X&amp;Y:B14@150</text>
          <text x="833" y="980" textLength="201" lengthAdjust="spacingAndGlyphs">DJP11a 400/200</text>
          <text x="1695" y="1000" textLength="190" lengthAdjust="spacingAndGlyphs">DJP14 350/250</text>
          <text x="641" y="776" textLength="52" lengthAdjust="spacingAndGlyphs">525</text>
          <text x="812" y="776" textLength="62" lengthAdjust="spacingAndGlyphs">2800</text>
          <text x="1030" y="776" textLength="57" lengthAdjust="spacingAndGlyphs">1300</text>
          <text x="1690" y="719" textLength="62" lengthAdjust="spacingAndGlyphs">1775</text>
          <text x="1884" y="719" textLength="62" lengthAdjust="spacingAndGlyphs">1925</text>
          <text x="1289" y="875" textLength="56" lengthAdjust="spacingAndGlyphs">1600</text>
          <text x="1457" y="875" textLength="59" lengthAdjust="spacingAndGlyphs">1620</text>
          <text transform="translate(1177 318) rotate(90)" textLength="69" lengthAdjust="spacingAndGlyphs">2225</text>
          <text transform="translate(1177 538) rotate(90)" textLength="67" lengthAdjust="spacingAndGlyphs">1875</text>
          <text transform="translate(1525 435) rotate(-90)" textLength="60" lengthAdjust="spacingAndGlyphs">1425</text>
          <text transform="translate(1525 743) rotate(-90)" textLength="66" lengthAdjust="spacingAndGlyphs">4375</text>
        </g>
        <g class="ct sm">
          <text transform="translate(965 462) rotate(-90)" textLength="36" lengthAdjust="spacingAndGlyphs">498</text>
          <text transform="translate(1031 469) rotate(-90)" textLength="34" lengthAdjust="spacingAndGlyphs">650</text>
          <text transform="translate(919 592) rotate(-90)" textLength="46" lengthAdjust="spacingAndGlyphs">1876</text>
        </g>
        <g class="bt-t">
          <text x="895.500" y="231">10</text><text x="1085" y="231">12</text><text x="1400" y="231">13</text><text x="1435" y="231">14</text><text x="1667" y="231">15</text><text x="1857" y="231">17</text>
          <text x="1400" y="985">13</text><text x="1435" y="985">14</text><text x="1814" y="985">16</text><text x="990" y="985">11</text>
          <text x="635" y="542">L</text><text x="635" y="816">G</text><text x="1904" y="552">K</text><text x="1904" y="711">H</text><text x="1904" y="963">F</text>
        </g>

        <!-- ucs -->
        <path class="ucsg" d="M682.500 928V893"/>
        <path d="M682.500 886l6 16h-12z" fill="#00e000"/>
        <path class="ucsr" d="M682.500 928H708"/>
        <path d="M720 928l-16-6v12z" fill="#f00000"/>
        <circle cx="682.500" cy="928" r="7" fill="#0000c0"/>
        <text class="ucst gtxt" x="682.500" y="880">Y</text>
        <text class="ucst rtxt" x="722" y="935">X</text>
      </svg>

      <div class="vbar">
        <svg class="vi"><use href="#v-orbit"/></svg>
        <svg class="vi"><use href="#v-3d"/></svg>
        <svg class="vi"><use href="#v-top"/></svg>
        <i class="car vcar"></i>
        <svg class="vi"><use href="#v-box"/></svg>
        <i class="car vcar"></i>
        <svg class="vi"><use href="#v-fit"/></svg>
        <svg class="vi"><use href="#v-cube"/></svg>
        <span class="vsep"></span>
        <svg class="vi"><use href="#v-list"/></svg>
      </div>
    </div>
  </main>

  <footer class="status">
    <span class="st coord">X = 24418 Y = 10283</span>
    <span class="st h1">层高:&nbsp; 2.6</span>
    <span class="st h2">标高:&nbsp; -4.4~-1.8</span>
    <span class="st h3">0</span>
    <span class="st h4">隐藏:&nbsp; 0</span>
    <span class="sb w30"><svg class="sbi"><use href="#s-l"/></svg></span>
    <span class="sb w45 on"><svg class="sbi"><use href="#s-rect"/></svg><i class="car"></i></span>
    <span class="sb w31"><svg class="sbi"><use href="#s-x"/></svg></span>
    <span class="sb w43"><svg class="sbi"><use href="#s-ang"/></svg><i class="car"></i></span>
    <span class="sb w43"><svg class="sbi"><use href="#s-plus"/></svg><i class="car"></i></span>
    <span class="sb w30"><svg class="sbi"><use href="#s-box"/></svg></span>
    <span class="sb w31"><svg class="sbi"><use href="#s-arc"/></svg></span>
    <span class="st hint">选择要平移的图元,右键确认</span>
  </footer>

  <footer class="taskbar">
    <svg class="tb-win" viewBox="0 0 20 20"><path fill="#fff" d="M0 3l8-1.200V9.500H0zM9 1.600L20 0v9.500H9zM0 10.500h8v7.700L0 17zM9 10.500h11V20L9 18.400z"/></svg>
    <svg class="tb-search" viewBox="0 0 20 20"><circle cx="12" cy="8" r="6.500" fill="none" stroke="#fff" stroke-width="1.500"/><path d="M7.500 12.500L1.500 19" stroke="#fff" stroke-width="1.500"/></svg>
    <svg class="tb-view" viewBox="0 0 20 20"><path fill="none" stroke="#fff" stroke-width="1.300" d="M4 5h12v10H4zM0 7h1.500v6H0zM18.500 7H20v6h-1.500zM4 1h12M4 19h12"/></svg>
    <span class="tb-app"><svg class="tb-ai" viewBox="0 0 28 28"><circle cx="14" cy="15" r="12" fill="#e8622a"/><circle cx="14" cy="16" r="7" fill="#5a2ca0"/><path d="M20 1c3 5 2 8-2 9 5 1 8 4 8 8 2-6 0-13-6-17z" fill="#ffb224"/><path d="M3 9c-3 6-2 12 3 16-2-5-1-9 3-12 0 0-3-1-6-4z" fill="#ff9524"/></svg></span>
    <span class="tb-app on"><svg class="tb-ai" viewBox="0 0 28 28"><rect x="1" y="1" width="26" height="26" rx="4" fill="#c9ebfb"/><path fill="url(#tgrad)" d="M6 6h16c2 0 2 4 0 4h-5v10c0 3-5 3-5 0V10H6C4 10 4 6 6 6z"/></svg></span>
    <span class="tb-app"><span class="tb-cad">CAD</span></span>
    <span class="tray">
      <svg class="tr-i up" viewBox="0 0 14 14"><path fill="none" stroke="#fff" stroke-width="1.200" d="M2 10l5-6 5 6"/></svg>
      <svg class="tr-i" viewBox="0 0 16 20"><ellipse cx="8" cy="9" rx="5.500" ry="7.500" fill="#f4f4f4"/><ellipse cx="8" cy="6" rx="4" ry="5" fill="#111"/><path d="M4 8h8l-4 2z" fill="#f0a000"/><path d="M3 13h10v2H3z" fill="#e01010"/><path d="M3 18h4v1H3zM9 18h4v1H9z" fill="#f0a000"/></svg>
      <svg class="tr-i" viewBox="0 0 18 18"><path fill="none" stroke="#fff" stroke-width="1.200" d="M7 2h10v10H7M1 5h7v9H1zM3 17h4M5 14v3"/></svg>
      <svg class="tr-i" viewBox="0 0 18 18"><path fill="#fff" d="M1 7h3l4-4v12l-4-4H1z"/><path stroke="#fff" stroke-width="1.200" d="M11 6l6 6M17 6l-6 6"/></svg>
      <svg class="tr-i" viewBox="0 0 20 18"><rect x="1" y="4" width="17" height="10" fill="none" stroke="#fff" stroke-width="1.200"/><rect x="3" y="6" width="13" height="6" fill="#fff"/><rect x="18" y="7" width="2" height="4" fill="#fff"/></svg>
      <span class="tr-t">英</span>
      <span class="tr-s">S</span>
      <span class="clock"><span>14:52</span><span>2021/6/8</span></span>
      <span class="notif"><svg class="tr-n" viewBox="0 0 20 20"><path fill="#fff" d="M0 2h20v13H7l-4 4v-4H0z"/><path stroke="#222" d="M4 6h12M4 10h12"/></svg><b>1</b></span>
    </span>
  </footer>
</div>
</body>
</html>
```
FILE: styles.css
```css
* { box-sizing: border-box; }
html, body { margin: 0; padding: 0; height: 100%; overflow: hidden; }
body { font-family: "Noto Sans CJK SC", "Noto Sans", sans-serif; font-size: 15px; color: #454545; background: #fff; line-height: 1; }
.defs { position: absolute; }
i { font-style: normal; display: inline-block; }

/* svg strokes */
.g, .b, .l, .lt, .gt, .bt, .bd, .bd2, .red, .bt2 { fill: none; stroke-width: 1.3; }
.g, .gt { stroke: #59616d; }
.b, .bt, .bd, .bd2, .bt2 { stroke: #2a83ea; }
.l { stroke: #c8c8c8; }
.lt { stroke: #b4b4b4; stroke-width: 1.6; }
.red { stroke: #d8372c; }
.bt, .gt { stroke-width: 2.6; }
.bt2 { stroke-width: 1.6; }
.bd { stroke-width: 1; fill: #2a83ea; }
.bf { fill: #2a83ea; stroke: none; }
.lf { fill: #c8c8c8; stroke: none; }
.gf { fill: #59616d; stroke: none; }
.gf2 { fill: #e8e8e8; stroke: none; }
.gs { fill: #59616d; stroke: none; }
.ff { fill: #c5ddf7; }
.white { fill: #fff; }
.v3 { font: 700 9px "Liberation Sans", sans-serif; fill: #2a83ea; stroke: none; }

.app { display: flex; flex-direction: column; width: 1920px; height: 1080px; }

/* header */
.header { display: flex; height: 51px; background: #fff; flex: none; }
.logo-wrap { width: 62px; flex: none; position: relative; }
.logo { display: block; width: 36px; height: 36px; margin: 5px 0 0 11px; }
.logo-mark { position: absolute; left: 48px; top: 39px; border-style: solid; border-width: 0 0 5px 5px; border-color: transparent transparent #666 transparent; }
.header-rows { flex: 1; display: flex; flex-direction: column; min-width: 0; }
.titlerow { height: 26px; display: flex; align-items: center; }
.qa { width: 614px; display: flex; align-items: center; flex: none; padding-left: 7px; }
.qi { width: 20px; height: 20px; margin-right: 12.400px; flex: none; }
.qi-c { display: inline-flex; align-items: center; width: 44px; flex: none; }
.qi-c .qi { margin-right: 5px; }
.qa-more { display: inline-flex; flex-direction: column; align-items: center; gap: 2px; margin-left: -4px; }
.qa-more .car { margin-left: 0; }
.qa-bar { width: 7px; height: 1px; background: #666; }
.title { width: 568px; text-align: center; white-space: nowrap; font-size: 15px; color: #444; flex: none; letter-spacing: .42px; }
.winctl { margin-left: auto; display: flex; align-items: center; gap: 33px; padding-right: 18px; }
.win-min { width: 8px; height: 2px; background: #666; margin-top: 4px; }
.win-ic { width: 11px; height: 11px; }
.menurow { height: 25px; display: flex; align-items: center; }
.menu { display: flex; height: 25px; align-items: center; }
.mi { padding: 0 16.400px; height: 24px; line-height: 24px; white-space: nowrap; }
.mi.on { background: #1b8df3; color: #fff; border-radius: 12px; }
.searchbox { margin-left: 523px; width: 398px; height: 21px; border: 2px solid #ececec; background: #fff; display: flex; align-items: center; justify-content: space-between; padding: 0 7px 0 3px; flex: none; }
.sicon { width: 16px; height: 16px; }
.user { width: 236px; flex: none; display: flex; align-items: center; padding-left: 8px; }
.avatar { width: 20px; height: 20px; flex: none; }
.uname { margin: 0 21px 0 1px; white-space: nowrap; }
.ui-ic { width: 20px; height: 20px; margin-right: 9px; flex: none; }
.help { font-size: 18px; color: #59616d; width: 28px; display: inline-flex; align-items: center; gap: 3px; }
.help .car { margin-left: 0; }
.user > .ui-ic:last-child { margin-left: 8px; }

/* carets */
.car { width: 0; height: 0; border-style: solid; border-width: 4px 3.500px 0; border-color: #777 transparent transparent; margin-left: 7px; flex: none; }
.car.dim { border-top-color: #c4c4c4; }

/* ribbon */
.ribbon { height: 122px; flex: none; display: flex; background: #fff; border-top: 1px solid #f0f0f0; border-bottom: 2px solid #dedede; padding-top: 3px; }
.grp { height: 114px; border-right: 1px solid #d8d8d8; display: flex; flex-direction: column; flex: none; }
.w1 { width: 292px; } .w2 { width: 242px; } .w3 { width: 346px; } .w4 { width: 296px; } .w5 { width: 83px; } .w6 { width: 332px; } .w7 { width: 98px; } .w8 { width: 157px; }
.grid { display: grid; grid-template-rows: repeat(3, 29px); height: 89px; margin-top: -2px; margin-bottom: 2px; flex: none; align-items: center; justify-items: start; }
.g1 { grid-template-columns: 65px 123px 1fr; }
.g1 .big { grid-row: 1 / 4; }
.g1 .t:nth-child(6) { grid-column: 2 / 4; }
.g2 { grid-template-columns: 99px 1fr; padding-left: 9px; }
.g3 { grid-template-columns: 84px 139px 1fr; padding-left: 9px; }
.g4 { grid-template-columns: 67px 68px 78px 1fr; padding-left: 9px; }
.g5 { grid-template-columns: 40px 1fr; padding-left: 8px; }
.g6 { grid-template-columns: 96px 103px 1fr; padding-left: 1px; }
.g6 .big { grid-row: 1 / 4; }
.g6 .bisoc { margin-left: -7px; }
.g7 { grid-template-columns: 78px; }
.g7 .big { grid-row: 1 / 4; }
.g8 { grid-template-columns: 1fr; padding-left: 10px; }
.t { display: inline-flex; align-items: center; white-space: nowrap; height: 23px; }
.t.off { color: #bdbdbd; }
.t.act { background: #c3daf3; border-radius: 3px; margin-left: -2px; padding-left: 2px; width: 64px; }
.ti { width: 20px; height: 20px; margin-right: 4px; flex: none; }
.big { display: flex; flex-direction: column; align-items: center; justify-self: stretch; align-self: start; white-space: nowrap; padding-top: 4px; position: relative; }
.bsel { width: 50px; margin-left: 10px; justify-self: start; }
.bigi { width: 40px; height: 40px; margin-bottom: 3px; flex: none; }
.big span { display: block; height: 22px; line-height: 22px; }
.bigcar { margin: 7px 0 0; }
.glabel { flex: 1; display: flex; align-items: center; justify-content: center; white-space: nowrap; height: 22px; }
.gl1 { padding-left: 6px; }

/* combos */
.combos { height: 34px; flex: none; background: #f0f0f0; display: flex; align-items: center; padding: 0 0 2px 4px; gap: 5.400px; }
.combo { width: 122px; height: 27px; background: #fff; border-radius: 3px; border: 1px solid #e8e8e8; display: flex; align-items: center; justify-content: space-between; padding: 0 5px 0 3px; }
.combo .car { border-top-color: #555; }

/* main */
.main { height: 783px; flex: none; display: flex; background: #f4f4f4; }
.nav { width: 264px; flex: none; background: #fff; border-right: 1px solid #ddd; border-left: 1px solid #ddd; border-bottom: 2px solid #ddd; display: flex; flex-direction: column; margin-right: 5px; }
.phead { height: 15px; margin-top: 1px; background: #e6e6e6; display: flex; align-items: center; justify-content: flex-end; padding-right: 5px; flex: none; border-top: 1px solid #ddd; }
.pclose { width: 10px; height: 10px; }
.navtitle { height: 28px; background: #f2f2f2; color: #8a8a8a; display: flex; align-items: center; padding: 0 0 4px 10px; flex: none; border-bottom: 1px solid #e0e0e0; }
.navtools { height: 34px; flex: none; display: flex; align-items: center; justify-content: space-between; padding: 0 2px 0 10px; border-bottom: 2px solid #e8e8e8; }
.spark { width: 13px; height: 13px; }
.navbtns { display: flex; gap: 4px; }
.nbtn { width: 30px; height: 27px; background: #c3daf3; border-radius: 5px; display: flex; align-items: center; justify-content: center; }
.nbi { width: 20px; height: 20px; }
.navtree { position: relative; flex: 1; padding-top: 2px; }
.nr { height: 30px; display: flex; align-items: center; padding-left: 15px; white-space: nowrap; }
.tr { width: 0; height: 0; border-style: solid; border-width: 5px 0 5px 6px; border-color: transparent transparent transparent #888; margin-right: 8px; flex: none; }
.tr.down { border-width: 6px 5px 0 5px; border-color: #888 transparent transparent; margin: 0 6px 0 -1px; }
.sub { padding-left: 55px; }
.ni { width: 18px; height: 18px; margin-right: 9px; flex: none; }
.nhl { display: flex; align-items: center; background: #c3daf3; border-radius: 3px; height: 26px; width: 175px; margin-left: -3px; padding-left: 3px; }
.dotted { position: relative; }
.dotted::after { content: ""; position: absolute; right: -7px; top: -2px; width: 7px; height: 7px; border-radius: 50%; background: #f00; }
.scroll { position: absolute; background: #cbcbcb; border-radius: 5px; width: 10px; }
.navscroll { right: 5px; top: 263px; height: 425px; }

.mid { width: 346px; flex: none; display: flex; flex-direction: column; gap: 6px; }
.plist { height: 415px; flex: none; border: 1px solid #ddd; border-top: 0; background: #fff; display: flex; flex-direction: column; overflow: hidden; }
.pprop { flex: 1; border: 1px solid #ddd; border-top: 0; background: #fff; display: flex; flex-direction: column; min-height: 0; margin-bottom: 2px; }
.pprop .phead { margin-top: 0; }
.tabs { height: 29px; background: #f2f2f2; display: flex; flex: none; border-bottom: 1px solid #ddd; }
.tab { width: 81px; display: flex; align-items: center; justify-content: center; padding-bottom: 2px; color: #8c8c8c; font-weight: 700; background: #e3e3e3; border: 1px solid #d4d4d4; }
.tab.on { color: #404040; background: #f4f4f4; }
.ptools { height: 34px; flex: none; display: flex; align-items: center; border-bottom: 2px solid #eee; padding-left: 5px; }
.pt { display: inline-flex; align-items: center; white-space: nowrap; }
.pti { width: 20px; height: 20px; margin-right: 5px; flex: none; }
.ptnew { width: 84px; }
.ptcopy { width: 70px; }
.ptdel { width: 69px; }
.ptfl { width: 102px; }
.ptmore { width: 12px; height: 24px; border: 1px solid #b8d4f4; border-radius: 4px; position: relative; }
.ptmore::after { content: "\25B8\25B8"; position: absolute; left: 0; top: 5px; font-size: 8px; letter-spacing: -2px; color: #666; }
.psearch { height: 25px; flex: none; display: flex; align-items: center; justify-content: space-between; padding: 0 6px 0 3px; color: #aaa; border-bottom: 2px solid #eaeaea; }
.ptree { position: relative; flex: 1; padding-top: 1px; overflow: hidden; letter-spacing: .3px; }
.pr { height: 30px; display: flex; align-items: center; padding-left: 41px; white-space: nowrap; }
.pr .tr.down { margin-right: 4px; }
.phl { background: #c3daf3; border-radius: 3px; height: 26px; width: 135px; display: flex; align-items: center; padding-left: 4px; margin-left: -4px; }
.child { padding-left: 88px; }
.di { width: 36px; flex: none; }
.pscroll { right: 3px; top: 164px; height: 94px; }

.ptable { border-collapse: collapse; table-layout: fixed; width: 343px; background: #fff; }
.c1 { width: 28px; } .c2 { width: 126px; } .c3 { width: 138px; } .c4 { width: 51px; }
.ptable th, .ptable td { height: 26.200px; border: 2px solid #ececec; padding: 0 3px; font-weight: 400; white-space: nowrap; text-align: left; overflow: hidden; }
.ptable th { text-align: center; }
.ptable tr > *:first-child { background: #f1f1f1; border-left: 0; text-align: center; padding: 0; }
.ptable thead th:first-child { background: #fff; }
.bl { color: #3f6fe0; }
.gr { color: #9a9a9a; }
.ck { text-align: center !important; padding: 0 2px 0 0 !important; }
.cb { width: 17px; height: 17px; border: 1px solid #8c8c8c; border-radius: 3px; vertical-align: middle; background: #fff; }
.ex { display: inline-block; width: 15px; height: 15px; line-height: 13px; border: 1px solid #777; border-radius: 3px; text-align: center; font-size: 13px; margin-right: 9px; vertical-align: -1px; }

.splitter { width: 5px; flex: none; background: #f4f4f4; }
.handle { display: block; width: 5px; height: 124px; margin-top: 331px; background: #5c6570; }

.canvas { position: relative; flex: 1; background: #000; overflow: hidden; }
.cad { display: block; }
.pad { fill: #c3dd75; }
.padline { fill: none; stroke: #e6e600; stroke-width: 2; }
.ol { fill: none; stroke: #b4b400; stroke-width: 2; }
.wd { fill: none; stroke: #e4e4e4; stroke-width: 1.500; }
.mg { fill: none; stroke: #c000c0; stroke-width: 2; }
.ax { fill: none; stroke: #ababab; stroke-width: 1.500; }
.ax2 { fill: none; stroke: #cfcfcf; stroke-width: 1.500; }
.axh { fill: none; stroke: #8c8c8c; stroke-width: 2; }
.axl { fill: none; stroke: #b8bf9c; stroke-width: 2; }
.or { fill: none; stroke: #e56a32; stroke-width: 2; }
.rd { fill: none; stroke: #c80000; stroke-width: 2; }
.dg { fill: none; stroke: #eef3d8; stroke-width: 1.500; }
.dgb { fill: none; stroke: #ffff66; stroke-width: 1.800; }
.dgw { fill: none; stroke: #eef3d8; stroke-width: 1.800; }
.dgg { fill: none; stroke: #b8b8b8; stroke-width: 1.800; }
.col { fill: #9b9900; stroke: #eeee00; stroke-width: 2; }
.col.dark { stroke: #a8a800; }
.colframe { fill: none; stroke: #f0f000; stroke-width: 2; }
.ext { fill: none; stroke: #c8d0b0; stroke-width: 1.300; }
.gn { fill: none; stroke: #00b000; stroke-width: 1.700; }
.gnb { fill: none; stroke: #3cf03c; stroke-width: 1.700; }
.bub circle { fill: none; stroke: #0a7a0a; stroke-width: 1.200; stroke-dasharray: 8 .5; }
.ct text { font-family: Roboto, "Liberation Sans", sans-serif; font-weight: 300; font-size: 30px; fill: #f0f4e2; }
.ct.sm text { font-size: 24px; font-weight: 400; fill: #f4f7ea; }
.bt-t text { font-family: Roboto, "Liberation Sans", sans-serif; font-size: 24px; font-weight: 400; fill: #fff; text-anchor: middle; }
.ucsg { stroke: #00e000; stroke-width: 6; fill: none; }
.ucsr { stroke: #f00000; stroke-width: 6; fill: none; }
.ucst { font-family: Roboto, "Liberation Sans", sans-serif; font-size: 22px; }
.gtxt { fill: #00e000; text-anchor: middle; }
.rtxt { fill: #f00000; }

.vbar { position: absolute; right: 0; top: 1px; width: 40px; height: 307px; background: #fff; display: flex; flex-direction: column; align-items: center; padding: 17px 2px 0 0; border-radius: 3px 0 0 3px; }
.vi { width: 24px; height: 24px; flex: none; margin-bottom: 12px; }
.vcar { margin: -1px 0 10px; border-width: 5px 4px 0; border-top-color: #555; }
.vsep { width: 28px; height: 1px; background: #aaa; margin: -4px 0 8px; flex: none; }

/* status */
.status { height: 40px; flex: none; background: #fbfbfb; display: flex; align-items: center; font-size: 15px; }
.st { white-space: nowrap; word-spacing: 5px; }
.coord { width: 330px; padding-left: 3px; }
.h1 { width: 104px; }
.h2 { width: 166px; }
.h3 { width: 130px; }
.h4 { width: 130px; }
.sb { height: 31px; border: 1px solid #b8b8b8; border-radius: 3px; background: #fff; display: inline-flex; align-items: center; justify-content: center; margin-right: 6px; flex: none; }
.sb .car { margin-left: 3px; border-width: 3px 3px 0; }
.sb.on { background: #d8e8fa; border-color: #4c93ea; }
.sbi { width: 20px; height: 20px; }
.w30 { width: 30px; } .w31 { width: 31px; } .w43 { width: 43px; } .w45 { width: 45px; }
.hint { margin-left: 2px; word-spacing: 0; }

/* taskbar */
.taskbar { height: 50px; flex: none; background: #222; display: flex; align-items: center; color: #fff; position: relative; }
.tb-win { width: 20px; height: 20px; margin-left: 20px; flex: none; }
.tb-search { width: 20px; height: 20px; margin-left: 40px; flex: none; }
.tb-view { width: 20px; height: 20px; margin-left: 40px; flex: none; }
.tb-app { width: 51px; height: 50px; display: flex; align-items: center; justify-content: center; border-bottom: 3px solid #76b9ed; flex: none; margin-right: 6px; }
.tb-view + .tb-app { margin-left: 29px; }
.tb-app.on { background: #4a4a4a; width: 61px; }
.tb-ai { width: 28px; height: 28px; }
.tb-cad { width: 28px; height: 30px; border-radius: 3px; background: linear-gradient(#7e8a96, #0f5ea8 25%, #0f5ea8 80%, #7e8a96); color: #dfe9f3; font: 700 10px "Liberation Sans", sans-serif; display: flex; align-items: center; justify-content: center; }
.tray { margin-left: auto; display: flex; align-items: center; }
.tr-i { width: 18px; height: 20px; margin-right: 12px; flex: none; }
.tr-i.up { width: 14px; margin-right: 16px; }
.tr-t { width: 20px; font-size: 16px; margin: 0 14px 0 0; }
.tr-s { width: 18px; height: 22px; border-radius: 4px; background: #e0421e; color: #fff; font: 700 15px "Liberation Sans", sans-serif; display: flex; align-items: center; justify-content: center; margin-right: 15px; }
.clock { display: flex; flex-direction: column; align-items: center; gap: 10px; width: 92px; font-size: 14px; margin-right: 14px; }
.notif { position: relative; width: 30px; margin-right: 22px; display: block; }
.tr-n { width: 22px; height: 22px; display: block; }
.notif b { position: absolute; right: 0; bottom: -8px; width: 16px; height: 16px; border: 1px solid #aaa; border-radius: 50%; background: #222; font: 400 11px/14px "Liberation Sans", sans-serif; text-align: center; }
```
